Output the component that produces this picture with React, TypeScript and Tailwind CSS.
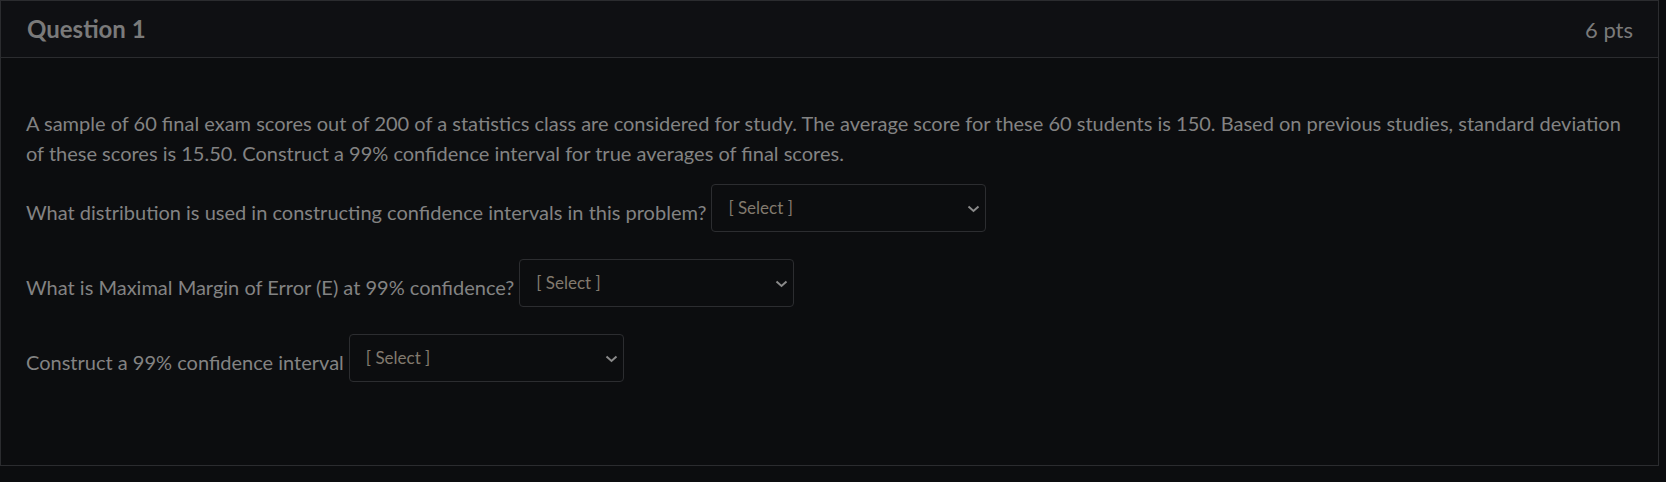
import React from 'react';

const questions = [
  'What distribution is used in constructing confidence intervals in this problem?',
  'What is Maximal Margin of Error (E) at 99% confidence?',
  'Construct a 99% confidence interval',
];

function SelectBox() {
  return (
    <div className="relative ml-[5px] flex h-[48px] w-[275px] shrink-0 items-center rounded-[4px] border border-[#2c2d30] bg-[#0c0d0f] pb-[1px] pl-[16px] text-[17px] text-[#827a6e]">
      <span>[ Select ]</span>
      <svg className="absolute right-[5px] top-[20px]" width="13" height="8" viewBox="0 0 13 8" fill="none">
        <path d="M1.5 1.5 L6.5 6 L11.5 1.5" stroke="#8a8a8a" strokeWidth="2" />
      </svg>
    </div>
  );
}

export default function App() {
  return (
    <div className="min-h-[482px] w-full bg-[#0c0d0f]" style={{ fontFamily: 'Lato, "Open Sans", sans-serif' }}>
      <div className="w-[1659px] h-[466px] border border-[#2b2c2f] bg-[#0c0d0f]">
        {/* Header */}
        <div className="flex h-[57px] items-center justify-between border-b border-[#2b2c2f] bg-[#0f1013] pl-[26px] pr-[25px]">
          <h2 className="text-[24px] font-bold text-[#7a7a7a]">Question 1</h2>
          <span className="text-[22px] text-[#7a7a7a]">6 pts</span>
        </div>

        {/* Body */}
        <div className="pl-[25px] pr-[30px] pt-[50px] text-[20px] leading-[30px] text-[#838383]">
          <p>
            A sample of 60 final exam scores out of 200 of a statistics class are considered for study. The average score for these 60 students is 150. Based on previous studies, standard deviation of these scores is 15.50. Construct a 99% confidence interval for true averages of final scores.
          </p>
          <div className="mt-[16px] flex flex-col gap-[27px]">
            {questions.map((q) => (
              <div key={q} className="flex items-end">
                <span className="pb-[5px]">{q}</span>
                <SelectBox />
              </div>
            ))}
          </div>
        </div>
      </div>
    </div>
  );
}
